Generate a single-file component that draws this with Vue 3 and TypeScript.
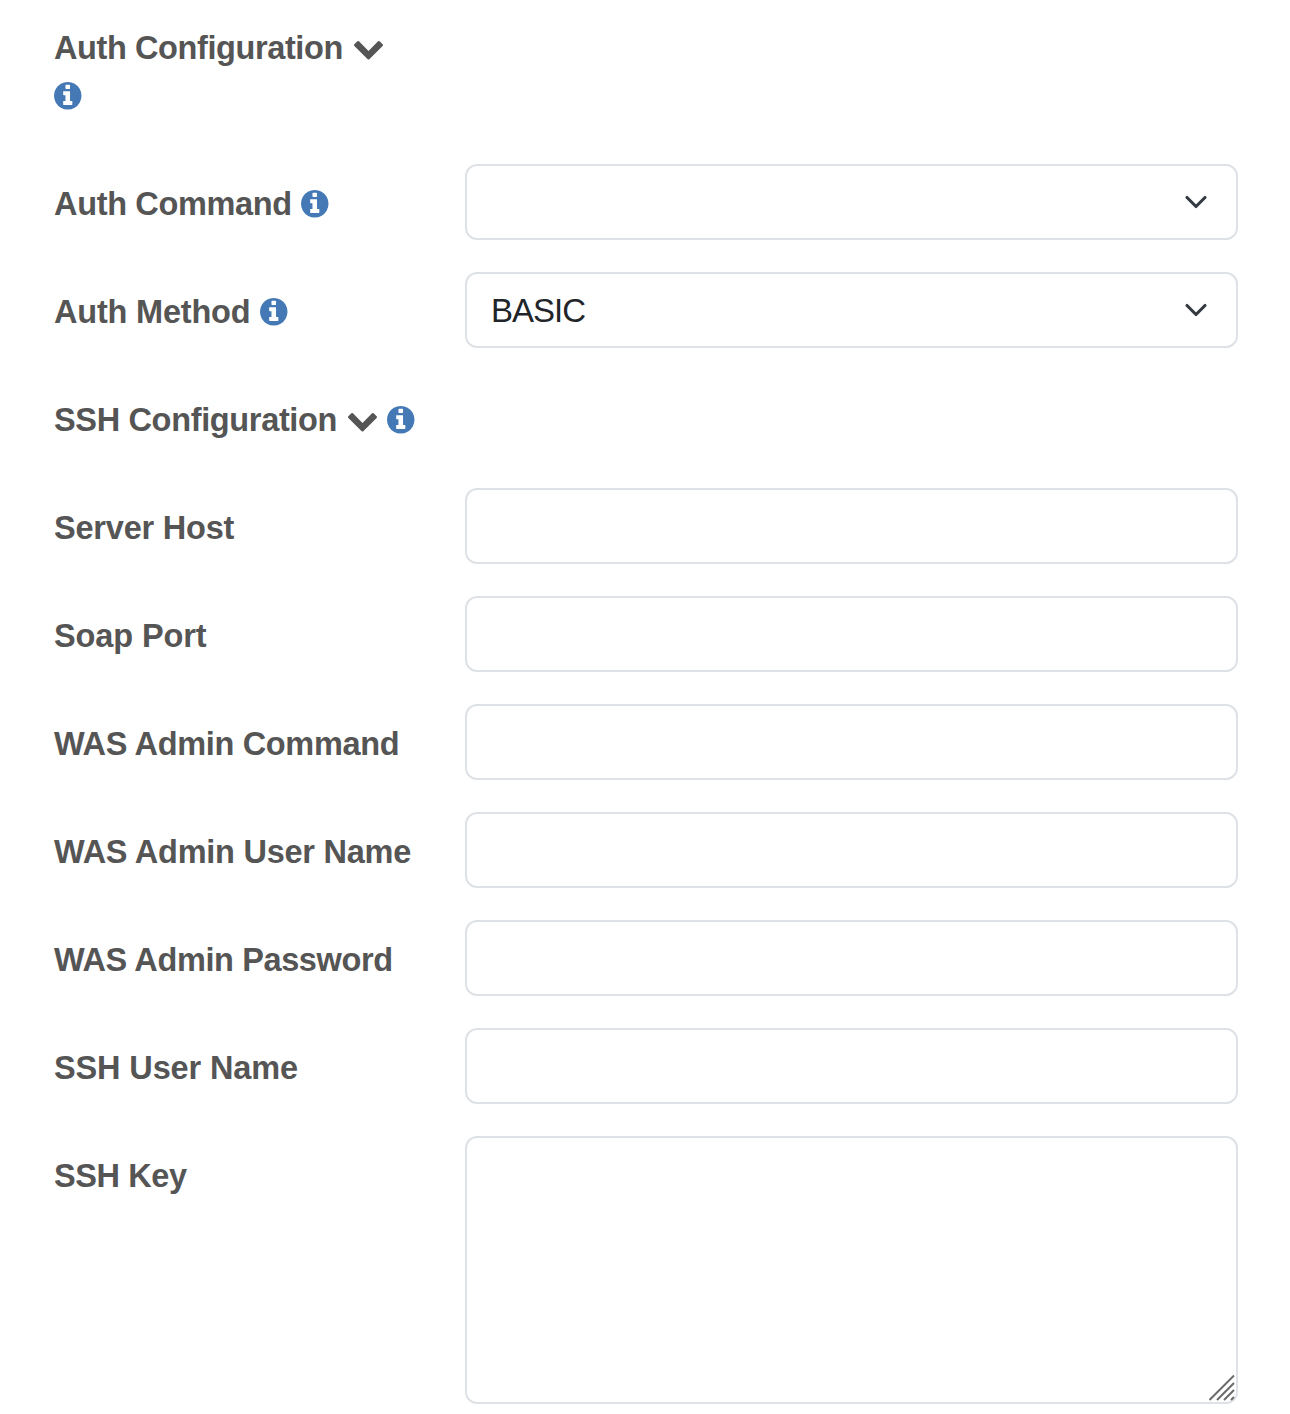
<script setup lang="ts">
type Control = 'none' | 'select' | 'input' | 'textarea'

interface Field {
  label: string
  spacing: number
  control: Control
  chevron?: boolean
  info?: boolean
  infoBelow?: boolean
  value?: string
}

const fields: Field[] = [
  { label: 'Auth Configuration', spacing: -0.4, control: 'none', chevron: true, info: true, infoBelow: true },
  { label: 'Auth Command', spacing: -0.34, control: 'select', info: true, value: '' },
  { label: 'Auth Method', spacing: -0.2, control: 'select', info: true, value: 'BASIC' },
  { label: 'SSH Configuration', spacing: -0.34, control: 'none', chevron: true, info: true },
  { label: 'Server Host', spacing: -0.2, control: 'input' },
  { label: 'Soap Port', spacing: -0.1, control: 'input' },
  { label: 'WAS Admin Command', spacing: -0.33, control: 'input' },
  { label: 'WAS Admin User Name', spacing: -0.25, control: 'input' },
  { label: 'WAS Admin Password', spacing: -0.38, control: 'input' },
  { label: 'SSH User Name', spacing: -0.13, control: 'input' },
  { label: 'SSH Key', spacing: -0.42, control: 'textarea' },
]
</script>

<template>
  <form class="form">
    <div v-for="f in fields" :key="f.label" class="row">
      <div class="label" :class="{ stacked: f.infoBelow }">
        <span class="title">
          <span class="text" :style="{ letterSpacing: f.spacing + 'px' }">{{ f.label }}</span>
          <svg v-if="f.chevron" class="toggle" viewBox="90 533 1612 1035">
            <path d="M1683 808l-742 741q-19 19-45 19t-45-19l-742-741q-19-19-19-45.5t19-45.5l166-165q19-19 45-19t45 19l531 531 531-531q19-19 45-19t45 19l166 165q19 19 19 45.5t-19 45.5z" />
          </svg>
        </span>
        <span v-if="f.info" class="info">
          <svg viewBox="0 128 1536 1536">
            <path d="M1024 1376v-160q0-14-9-23t-23-9h-96v-512q0-14-9-23t-23-9h-320q-14 0-23 9t-9 23v160q0 14 9 23t23 9h96v320h-96q-14 0-23 9t-9 23v160q0 14 9 23t23 9h448q14 0 23-9t9-23zm-128-896v-160q0-14-9-23t-23-9h-192q-14 0-23 9t-9 23v160q0 14 9 23t23 9h192q14 0 23-9t9-23zm640 416q0 209-103 385.5t-279.5 279.5-385.5 103-385.5-103-279.5-279.5-103-385.5 103-385.5 279.5-279.5 385.5-103 385.5 103 279.5 279.5 103 385.5z" />
          </svg>
        </span>
      </div>
      <div v-if="f.control === 'select'" class="field">
        <select class="control" :value="f.value">
          <option :value="f.value">{{ f.value }}</option>
        </select>
        <svg class="caret" viewBox="0 0 16 16">
          <path d="m2 5 6 6 6-6" />
        </svg>
      </div>
      <div v-else-if="f.control === 'input'" class="field">
        <input class="control" type="text" />
      </div>
      <div v-else-if="f.control === 'textarea'" class="field">
        <textarea class="control area"></textarea>
        <svg class="grip" viewBox="0 0 26 26">
          <path d="M.5 25 25 .5M8 25 25 8M15 25 25 15M22 25 25 22" />
        </svg>
      </div>
    </div>
  </form>
</template>

<style>
body {
  background: #fff;
}
</style>

<style scoped>
.form {
  display: flex;
  flex-direction: column;
  gap: 32px;
  box-sizing: border-box;
  width: 1290px;
  height: 1414px;
  padding: 8px 52px 0 54px;
  overflow: hidden;
  font-family: "Liberation Sans", Arial, sans-serif;
}
.row {
  display: flex;
  align-items: flex-start;
}
.label {
  display: flex;
  flex: 0 0 411px;
  box-sizing: border-box;
  padding: 14px 0;
  color: #555;
  font-size: 32.5px;
  font-weight: 700;
  line-height: 48px;
  white-space: nowrap;
}
.stacked {
  flex-direction: column;
}
.title {
  display: flex;
  align-items: center;
  height: 48px;
}
.text {
  padding-top: 4px;
}
.toggle {
  width: 29px;
  height: 18.6px;
  margin: 8px 0 0 11px;
  overflow: visible;
  fill: #555;
}
.info {
  display: flex;
  align-items: center;
  height: 48px;
  margin-left: 9.5px;
}
.stacked .info {
  margin-left: 0;
}
.info svg {
  width: 27.5px;
  height: 27.5px;
  margin-top: 3px;
  overflow: visible;
  fill: #4479b5;
}
.field {
  position: relative;
  flex: 1;
  height: 76px;
}
.row:has(.area) .field {
  height: 268px;
}
.control {
  display: block;
  box-sizing: border-box;
  width: 100%;
  height: 100%;
  margin: 0;
  padding: 2px 24px 0;
  border: 2px solid #dee2e6;
  border-radius: 12px;
  outline: none;
  background: #fff;
  color: #212529;
  font: 400 33px/48px "Liberation Sans", Arial, sans-serif;
  letter-spacing: -1px;
  appearance: none;
  resize: none;
}
.caret {
  position: absolute;
  top: 26px;
  right: 30px;
  width: 24px;
  height: 24px;
  fill: none;
  stroke: #343a40;
  stroke-width: 2.1;
  stroke-linecap: round;
  stroke-linejoin: round;
  pointer-events: none;
}
.grip {
  position: absolute;
  right: 3px;
  bottom: 3px;
  width: 26px;
  height: 26px;
  fill: none;
  stroke: #6b6b6b;
  stroke-width: 2;
  pointer-events: none;
}
</style>
